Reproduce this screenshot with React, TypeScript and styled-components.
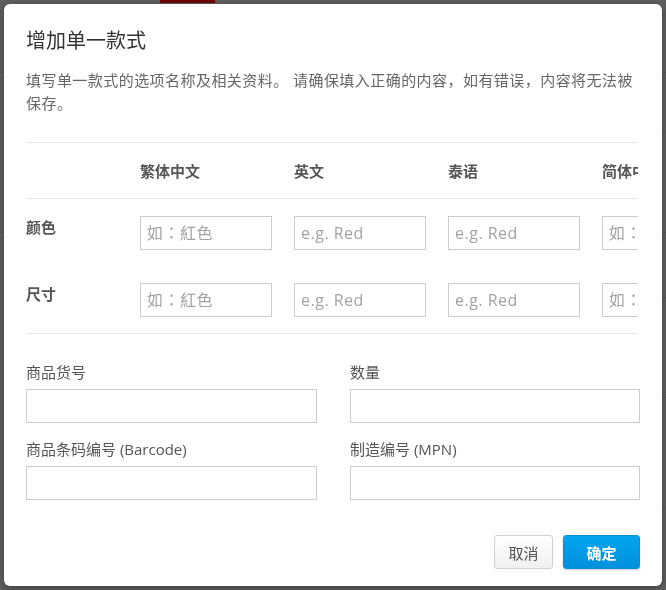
import styled, { createGlobalStyle } from 'styled-components';

const GlobalStyle = createGlobalStyle`
  html, body {
    margin: 0;
    padding: 0;
    background: #5f5f5f;
  }
  * {
    box-sizing: border-box;
  }
  body {
    font-family: "Open Sans", "Noto Sans CJK SC", sans-serif;
  }
`;

const Page = styled.div`
  width: 666px;
  height: 590px;
  overflow: hidden;
`;

const PageHeader = styled.div`
  height: 3px;
  display: flex;
  padding-left: 160px;
`;

const PageChip = styled.div`
  width: 55px;
  background: #6e0707;
`;

const PageRow = styled.div<{ $h: number }>`
  height: ${p => p.$h}px;
  border-bottom: 1px solid #565656;
`;

const Overlay = styled.div`
  position: fixed;
  inset: 0;
  padding: 4px;
  display: flex;
`;

const Modal = styled.div`
  flex: 1;
  background: #fff;
  border-radius: 6px;
  box-shadow: 0 2px 8px rgba(0, 0, 0, 0.35);
  padding: 22px 22px 17px;
  display: flex;
  flex-direction: column;
`;

const Title = styled.h2`
  margin: 0;
  font-size: 20px;
  line-height: 30px;
  font-weight: 400;
  color: #333;
`;

const Description = styled.p`
  margin: 13px 0 0;
  font-size: 15px;
  line-height: 23px;
  letter-spacing: 0.45px;
  color: #666;
`;

const OptionTable = styled.div`
  margin-top: 27px;
  width: 612px;
  overflow: hidden;
  border-top: 1px solid #e6e6e6;
  border-bottom: 1px solid #e6e6e6;
`;

const TableRow = styled.div<{ $head?: boolean }>`
  display: grid;
  grid-template-columns: 92px repeat(4, 132px);
  column-gap: 22px;
  width: 708px;
  align-items: ${p => (p.$head ? 'center' : 'start')};
  height: ${p => (p.$head ? '56px' : '67px')};
  padding-top: ${p => (p.$head ? '0' : '17px')};
  border-bottom: ${p => (p.$head ? '1px solid #e6e6e6' : 'none')};
`;

const HeadCell = styled.div`
  font-size: 15px;
  font-weight: 700;
  color: #555;
  white-space: nowrap;
`;

const RowLabel = styled.div`
  font-size: 15px;
  font-weight: 700;
  color: #555;
  line-height: 20px;
  padding-top: 1px;
`;

const TextInput = styled.input`
  display: block;
  width: 100%;
  height: 34px;
  border: 1px solid #ccc;
  border-radius: 0;
  padding: 0 6px;
  font-family: "Open Sans", "Noto Sans CJK SC", sans-serif;
  font-size: 16px;
  color: #333;
  background: #fff;
  outline: none;
  &::placeholder {
    color: #a3a3a3;
  }
`;

// traditional-Chinese face so the full-width colon sits centred
const OptionInput = styled(TextInput)`
  font-family: "Open Sans", "Noto Sans CJK TC", sans-serif;
  letter-spacing: 0.5px;
`;

const FieldGrid = styled.div`
  margin-top: 28px;
  display: grid;
  grid-template-columns: 291px 290px;
  column-gap: 33px;
  row-gap: 16px;
`;

const Field = styled.div`
  display: flex;
  flex-direction: column;
  gap: 7px;
`;

const FieldLabel = styled.label`
  font-size: 15px;
  line-height: 20px;
  color: #555;
`;

const Footer = styled.div`
  margin-top: auto;
  display: flex;
  justify-content: flex-end;
  gap: 10px;
`;

const Button = styled.button<{ $primary?: boolean }>`
  height: 34px;
  min-width: ${p => (p.$primary ? '77px' : '59px')};
  padding: 0 12px;
  border-radius: 3px;
  font-family: "Open Sans", "Noto Sans CJK SC", sans-serif;
  font-size: 15px;
  font-weight: ${p => (p.$primary ? 700 : 400)};
  color: ${p => (p.$primary ? '#fff' : '#555')};
  border: 1px solid ${p => (p.$primary ? '#0a8fd6' : '#d0d0d0')};
  background: ${p =>
    p.$primary
      ? 'linear-gradient(#03a5ef, #0090dd)'
      : 'linear-gradient(#ffffff, #f0f0f0)'};
  box-shadow: ${p => (p.$primary ? '0 1px 2px rgba(0,0,0,0.2)' : 'none')};
  cursor: pointer;
`;

const languages = ['繁体中文', '英文', '泰语', '简体中文'];
const placeholders = ['如：紅色', 'e.g. Red', 'e.g. Red', '如：紅色'];
const options = ['颜色', '尺寸'];

const fields = ['商品货号', '数量', '商品条码编号 (Barcode)', '制造编号 (MPN)'];

export default function App() {
  return (
    <>
      <GlobalStyle />
      <Page>
        <PageHeader>
          <PageChip />
        </PageHeader>
        {[70, 60, 100, 65, 100, 110].map((h, i) => (
          <PageRow key={i} $h={h} />
        ))}
      </Page>
      <Overlay>
        <Modal>
          <Title>增加单一款式</Title>
          <Description>
            填写单一款式的选项名称及相关资料。 请确保填入正确的内容，如有错误，内容将无法被保存。
          </Description>
          <OptionTable>
            <TableRow $head>
              <div />
              {languages.map(l => (
                <HeadCell key={l}>{l}</HeadCell>
              ))}
            </TableRow>
            {options.map(o => (
              <TableRow key={o}>
                <RowLabel>{o}</RowLabel>
                {placeholders.map((ph, i) => (
                  <OptionInput key={i} placeholder={ph} />
                ))}
              </TableRow>
            ))}
          </OptionTable>
          <FieldGrid>
            {fields.map(f => (
              <Field key={f}>
                <FieldLabel>{f}</FieldLabel>
                <TextInput />
              </Field>
            ))}
          </FieldGrid>
          <Footer>
            <Button>取消</Button>
            <Button $primary>确定</Button>
          </Footer>
        </Modal>
      </Overlay>
    </>
  );
}
